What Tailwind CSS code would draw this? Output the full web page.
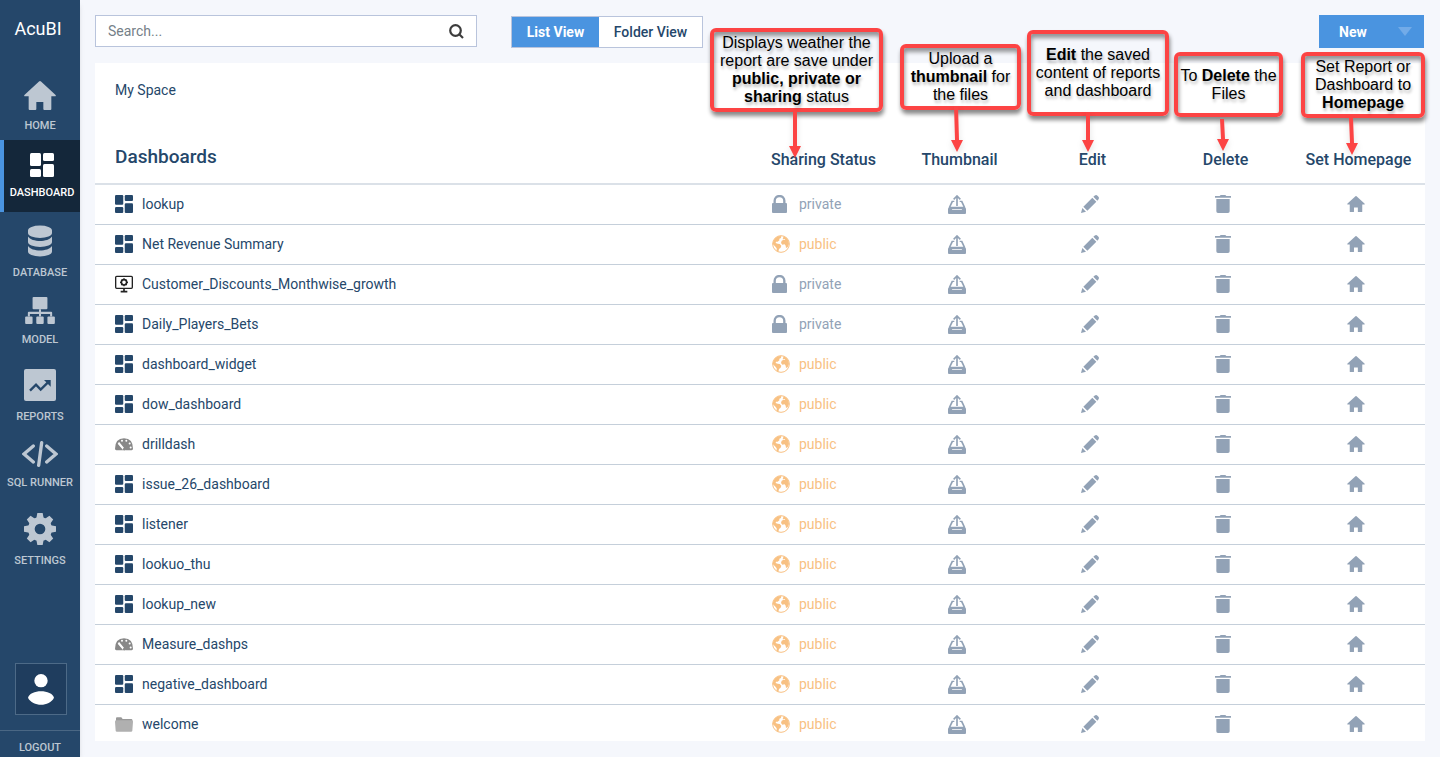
<!DOCTYPE html>
<html lang="en">
<head>
<meta charset="utf-8">
<meta name="viewport" content="width=device-width, initial-scale=1">
<title>AcuBI - Dashboards</title>
<script src="https://cdn.jsdelivr.net/npm/@tailwindcss/browser@4"></script>
</head>
<body class="relative flex h-screen overflow-hidden bg-[#f5f7fc] font-['Roboto',sans-serif] text-sm text-[#25476a]">

<!-- Icon definitions -->
<svg class="hidden" aria-hidden="true">
  <symbol id="home" viewBox="0 0 96 87"><path d="M45 1.500q3-2.500 6 0L94 41q4 5-2 5H82v38q0 3-3 3H61q-3 0-3-3V63H37v21q0 3-3 3H17q-3 0-3-3V46H4q-6 0-2-5z"/></symbol>
  <symbol id="dash" viewBox="0 0 24 24"><rect width="11" height="13" rx="1.500"/><rect y="16" width="11" height="8" rx="1.500"/><rect x="13" width="11" height="8" rx="1.500"/><rect x="13" y="11" width="11" height="13" rx="1.500"/></symbol>
  <symbol id="database" viewBox="0 0 24 31"><path d="M0 5a12 5 0 0 1 24 0v2.500a12 5 0 0 1-24 0zM0 11c2 3 7 4.500 12 4.500s10-1.500 12-4.500v5.500a12 5 0 0 1-24 0zM0 20.500c2 3 7 4.500 12 4.500s10-1.500 12-4.500v5.500a12 5 0 0 1-24 0z"/></symbol>
  <symbol id="model" viewBox="0 0 88 80"><rect x="22" width="44" height="36" rx="3"/><path d="M41 36h6v8h30q3 0 3 3v11h-6v-8H47v8h-6v-8H14v8H8V47q0-3 3-3h30z"/><rect y="58" width="22" height="22" rx="3"/><rect x="33" y="58" width="22" height="22" rx="3"/><rect x="66" y="58" width="22" height="22" rx="3"/></symbol>
  <symbol id="reports" viewBox="0 0 96 96"><rect width="96" height="96" rx="6"/><path d="M18 65l18-18 14 15 25-25" fill="none" stroke="#25476a" stroke-width="7"/><path d="M60 33h20v20z" fill="#25476a"/></symbol>
  <symbol id="code" viewBox="0 0 108 78"><path d="M34 15L6 39l28 24M59 5l-9 68M74 15l28 24-28 24" fill="none" stroke="currentColor" stroke-width="10" stroke-linecap="round"/></symbol>
  <symbol id="gear" viewBox="0 0 96 96"><circle cx="48" cy="48" r="26" fill="none" stroke="currentColor" stroke-width="20"/><g id="teeth"><path d="M40 0h16l3 16H37zM40 96h16l3-16H37zM0 40v16l16 3V37zM96 40v16l-16 3V37z"/></g><use href="#teeth" transform="rotate(45 48 48)"/></symbol>
  <symbol id="user" viewBox="0 0 78 93"><circle cx="39" cy="20" r="20"/><path d="M0 71C6 45 72 45 78 71 64 99 14 99 0 71z"/></symbol>
  <symbol id="lock" viewBox="0 0 45 54"><rect y="24" width="45" height="30" rx="3"/><path d="M8 26V17a14.500 14 0 0 1 29 0v9" fill="none" stroke="currentColor" stroke-width="7"/></symbol>
  <symbol id="globe" viewBox="0 0 54 54"><circle cx="27" cy="27" r="25" fill="none" stroke="currentColor" stroke-width="3"/><path d="M3 22Q7 9 19 4l9-1-1 6-6 3 2 3-6 5h-5l-1 4 6 2 6 1 5 5-2 6-5 4-2 9-5-2v-9l-5-6-7-7zM35 4q9 3 14 12l2 11-4 10-5 2-1-7-3-4-7 1-4-5 2-7 6-3 5 1-2-3-6 1 1-4z"/></symbol>
  <symbol id="upload" viewBox="0 0 54 57"><path d="M0 40h10l3 4h28l3-4h10v14q0 3-3 3H3q-3 0-3-3zM2 37l9-20h8v4h-4L8 35h38l-7-14h-4v-4h8l9 20v5H2z"/><path d="M27 33V5M17 13L27 3l10 10" fill="none" stroke="currentColor" stroke-width="5"/></symbol>
  <symbol id="pencil" viewBox="0 0 54 54"><path d="M0 54l4-15 11 11zM7 35L34 8l12 12-27 27zM37 5q5-5 8-5 2 0 6 4 3 3 3 5 0 3-5 8z"/></symbol>
  <symbol id="trash" viewBox="0 0 48 54"><path d="M0 3h14l3-3h14l3 3h14v5H0zM4 12h40v37q0 5-5 5H9q-5 0-5-5z"/></symbol>
  <symbol id="monitor" viewBox="0 0 54 54" fill="none" stroke="#222"><rect x="2" y="4" width="50" height="36" rx="3" stroke-width="4"/><path d="M27 40v9M17 50h20" stroke-width="5"/><circle cx="27" cy="22" r="8" stroke-width="5"/><path d="M27 10v4m0 16v4M15 22h4m16 0h4M19 14l3 3m10 10l3 3m0-16l-3 3M22 27l-3 3" stroke-width="4"/></symbol>
  <symbol id="gauge" viewBox="0 0 54 38"><path d="M0 32Q0 0 27 0t27 32q0 4-4 4H32L11 14 8 17l17 19H4q-4 0-4-4z" fill="#888"/><g fill="#fff"><circle cx="21" cy="8" r="3"/><circle cx="34" cy="8" r="3"/><circle cx="44" cy="16" r="3"/><circle cx="47" cy="28" r="3"/></g><path d="M11 13l17 21" stroke="#fff" stroke-width="4"/><circle cx="28" cy="33" r="4" fill="#888"/></symbol>
  <symbol id="folder" viewBox="0 0 54 45"><path d="M3 8V4q0-3 3-3h13l4 5h26q3 0 3 3v5H3z" fill="#999"/><path d="M0 14q0-4 4-4h46q4 0 4 4l-2 27q0 3-4 3H6q-4 0-4-3z" fill="#b0b0b0"/></symbol>
</svg>

<aside class="flex w-20 shrink-0 flex-col bg-[#25476a] text-[11px] leading-4 font-medium text-[#bdc7d2] shadow-md">
  <div class="flex h-[68px] items-start justify-center pt-[17px] pr-1 text-lg leading-6 font-normal text-white">AcuBI</div>
  <nav class="flex flex-col text-center whitespace-nowrap">
    <a href="#" class="flex h-[72px] flex-col items-center justify-end gap-2 pb-1.5"><svg class="h-[29px] w-8 fill-current"><use href="#home"/></svg>HOME</a>
    <a href="#" class="flex h-[72px] flex-col items-center justify-end gap-2 border-l-4 border-[#4a94e0] bg-[#14273a] pb-[11px] text-white"><svg class="size-6 fill-current"><use href="#dash"/></svg>DASHBOARD</a>
    <a href="#" class="flex h-[72px] flex-col items-center justify-end gap-2 pb-[3px]"><svg class="h-8 w-6 fill-current"><use href="#database"/></svg>DATABASE</a>
    <a href="#" class="flex h-[67px] flex-col items-center justify-end gap-2 pb-[3px]"><svg class="h-[27px] w-[30px] fill-current"><use href="#model"/></svg>MODEL</a>
    <a href="#" class="flex h-[77px] flex-col items-center justify-end gap-2 pb-[3px]"><svg class="size-8 fill-current"><use href="#reports"/></svg>REPORTS</a>
    <a href="#" class="flex h-[66px] flex-col items-center justify-end gap-2 pb-[3px]"><svg class="h-[26px] w-9 fill-current"><use href="#code"/></svg>SQL RUNNER</a>
    <a href="#" class="flex h-[78px] flex-col items-center justify-end gap-2 pb-[3px]"><svg class="size-8 fill-current"><use href="#gear"/></svg>SETTINGS</a>
  </nav>
  <button type="button" aria-label="Profile" class="mt-auto mb-[15px] ml-[15px] flex size-[52px] items-center justify-center border border-[#4d6a87] bg-[#1f3d5e] text-white"><svg class="h-[31px] w-[26px] fill-current"><use href="#user"/></svg></button>
  <a href="#" class="h-[27px] border-t border-[#4a6784] pt-[9px] text-center">LOGOUT</a>
</aside>

<main class="relative flex min-w-0 flex-1 flex-col px-[15px] pt-[15px] pb-4">
  <header class="mb-[15px] flex h-[33px] items-start pr-px">
    <label class="flex h-8 w-[382px] items-center border border-[#b9c4dc] bg-white px-3">
      <input type="search" aria-label="Search" placeholder="Search..." class="min-w-0 flex-1 outline-none placeholder:text-[#757f88]">
      <svg viewBox="0 0 15 15" class="size-[15px]" fill="none" stroke="#3c3c3c" stroke-width="2.200"><circle cx="6.500" cy="6.500" r="5.300"/><path d="M10 10l4 4"/></svg>
    </label>
    <div class="mt-px ml-[34px] flex h-8 border border-[#b9c4dc] bg-white text-sm font-bold">
      <button type="button" class="w-[87px] bg-[#4a94e0] text-white">List View</button>
      <button type="button" class="w-[103px] font-medium">Folder View</button>
    </div>
    <button type="button" class="ml-auto flex h-[33px] w-[105px] items-center justify-between bg-[#4a94e0] pr-3 pl-5 text-sm font-bold text-white">New<svg viewBox="0 0 14 9" class="h-[9px] w-[14px] fill-[#72abe8]"><path d="M0 0h14L7 9z"/></svg></button>
  </header>

  <section class="min-h-0 flex-1 overflow-hidden bg-white">
    <p class="px-5 pt-4 pb-[38px] leading-[22px]">My Space</p>
    <table class="w-full table-fixed border-collapse">
      <thead>
        <tr class="h-[45px] border-b-2 border-[#dbe1e8] text-base leading-6">
          <th scope="col" class="w-1/2 pb-2 pl-5 text-left text-[19px] font-medium">Dashboards</th>
          <th scope="col" class="w-[10%] pr-1.5 pb-0.5 font-medium whitespace-nowrap">Sharing Status</th>
          <th scope="col" class="w-[10%] pb-0.5 font-medium">Thumbnail</th>
          <th scope="col" class="w-[10%] pb-0.5 font-medium">Edit</th>
          <th scope="col" class="w-[10%] pb-0.5 font-medium">Delete</th>
          <th scope="col" class="w-[10%] pb-0.5 font-medium whitespace-nowrap">Set Homepage</th>
        </tr>
      </thead>
      <tbody id="rows"></tbody>
    </table>
  </section>

  <!-- Help callouts, aligned with the table columns -->
  <div class="pointer-events-none absolute inset-x-[15px] top-0 grid grid-cols-[50%_repeat(5,10%)] text-center font-['Liberation_Sans',sans-serif] text-base leading-[18px] text-black [text-shadow:1px_3px_3px_#0004]">
    <div></div>
    <div class="relative">
      <p class="absolute top-7 -left-[50px] flex h-[84px] w-[173px] items-center justify-center rounded-md border-4 border-[#fc4444] shadow-[1px_4px_4px_#0007,inset_1px_4px_4px_#0006]"><span>Displays weather the<br>report are save under<br><b>public, private or</b><br><b>sharing</b> status</span></p>
      <svg viewBox="0 0 12 46" class="absolute top-28 left-[29px] h-[46px] w-3 fill-[#fc4444] drop-shadow-md"><path d="M4 0h4v34h4L6 46 0 34h4z"/></svg>
    </div>
    <div class="relative">
      <p class="absolute top-11 left-[7px] flex h-[66px] w-[121px] items-center justify-center rounded-md border-4 border-[#fc4444] shadow-[1px_4px_4px_#0007,inset_1px_4px_4px_#0006]"><span>Upload a<br><b>thumbnail</b> for<br>the files</span></p>
      <svg viewBox="0 0 12 46" class="absolute top-[106px] left-[58px] h-[46px] w-3 fill-[#fc4444] drop-shadow-md"><path d="M3 0h4l1 34h4L6 46 0 34h4z"/></svg>
    </div>
    <div class="relative">
      <p class="absolute top-[30px] left-px flex h-[86px] w-[142px] items-center justify-center rounded-md border-4 border-[#fc4444] shadow-[1px_4px_4px_#0007,inset_1px_4px_4px_#0006]"><span><b>Edit</b> the saved<br>content of reports<br>and dashboard</span></p>
      <svg viewBox="0 0 12 40" class="absolute top-28 left-14 h-10 w-3 fill-[#fc4444] drop-shadow-md"><path d="M4 0h4v28h4L6 40 0 28h4z"/></svg>
    </div>
    <div class="relative">
      <p class="absolute top-[52px] left-[15px] flex h-[65px] w-[109px] items-center justify-center rounded-md border-4 border-[#fc4444] whitespace-nowrap shadow-[1px_4px_4px_#0007,inset_1px_4px_4px_#0006]"><span>To <b>Delete</b> the<br>Files</span></p>
      <svg viewBox="0 0 12 32" class="absolute top-[119px] left-[58px] h-8 w-3 fill-[#fc4444] drop-shadow-md"><path d="M3 0h4l1 20h4L6 32 0 20h4z"/></svg>
    </div>
    <div class="relative">
      <p class="absolute top-[52px] left-[9px] flex h-[66px] w-[124px] items-center justify-center rounded-md border-4 border-[#fc4444] shadow-[1px_4px_4px_#0007,inset_1px_4px_4px_#0006]"><span>Set Report or<br>Dashboard to<br><b>Homepage</b></span></p>
      <svg viewBox="0 0 12 37" class="absolute top-[118px] left-[54px] h-[37px] w-3 fill-[#fc4444] drop-shadow-md"><path d="M3 0h4l1 25h4L6 37 0 25h4z"/></svg>
    </div>
  </div>
</main>

<script>
const items = [
  ["lookup", "dash", "private"],
  ["Net Revenue Summary", "dash", "public"],
  ["Customer_Discounts_Monthwise_growth", "monitor", "private"],
  ["Daily_Players_Bets", "dash", "private"],
  ["dashboard_widget", "dash", "public"],
  ["dow_dashboard", "dash", "public"],
  ["drilldash", "gauge", "public"],
  ["issue_26_dashboard", "dash", "public"],
  ["listener", "dash", "public"],
  ["lookuo_thu", "dash", "public"],
  ["lookup_new", "dash", "public"],
  ["Measure_dashps", "gauge", "public"],
  ["negative_dashboard", "dash", "public"],
  ["welcome", "folder", "public"]
];
const action = (icon, label, size) =>
  `<td class="pr-1.5 text-[#92a2b6]"><button type="button" aria-label="${label}" class="mx-auto block"><svg class="${size} fill-current"><use href="#${icon}"/></svg></button></td>`;
document.getElementById("rows").innerHTML = items.map(([name, icon, status]) => `
  <tr class="h-10 border-b border-[#c5cfda]">
    <td class="pl-5"><a href="#" class="flex items-center gap-[9px]"><svg class="${icon === "gauge" ? "h-[13px] w-[18px]" : icon === "folder" ? "h-[15px] w-[18px]" : "size-[18px]"} fill-current"><use href="#${icon}"/></svg>${name}</a></td>
    <td class="pl-3"><span class="flex items-center ${status === "private" ? "gap-3 text-[#92a2b6]" : "gap-[9px] text-[#f8c183]"}"><svg class="${status === "private" ? "w-[15px]" : "w-[18px]"} h-[18px] fill-current"><use href="#${status === "private" ? "lock" : "globe"}"/></svg>${status}</span></td>
    ${action("upload", "Upload thumbnail", "h-[19px] w-[18px]")}
    ${action("pencil", "Edit", "size-[18px]")}
    ${action("trash", "Delete", "h-[18px] w-4")}
    ${action("home", "Set as homepage", "h-4 w-[18px]")}
  </tr>`).join("");
</script>
</body>
</html>
